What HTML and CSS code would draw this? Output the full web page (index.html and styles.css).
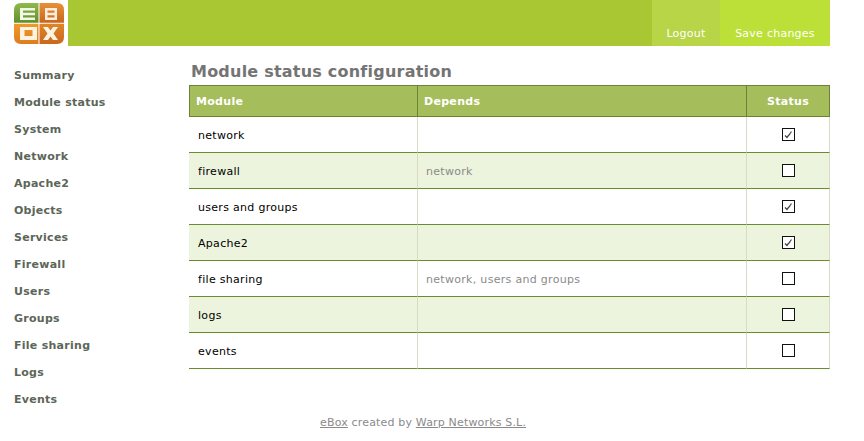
FILE: index.html
```html
<!DOCTYPE html>
<html lang="en">
<head>
<meta charset="utf-8">
<title>Module status configuration</title>
<link rel="stylesheet" href="styles.css">
</head>
<body>
<div class="page">
  <header class="top">
    <div class="logo">
      <svg width="50" height="41" viewBox="0 0 50 41" aria-label="eBox">
        <defs>
          <linearGradient id="g1" x1="0" y1="0" x2="0" y2="1"><stop offset="0" stop-color="#8fbb4c"/><stop offset="1" stop-color="#5f8f2c"/></linearGradient>
          <linearGradient id="g2" x1="0" y1="0" x2="0" y2="1"><stop offset="0" stop-color="#e8913a"/><stop offset="1" stop-color="#c9651c"/></linearGradient>
          <linearGradient id="g3" x1="0" y1="0" x2="0" y2="1"><stop offset="0" stop-color="#f09a2a"/><stop offset="1" stop-color="#dd7d1e"/></linearGradient>
          <linearGradient id="g4" x1="0" y1="0" x2="0" y2="1"><stop offset="0" stop-color="#e08428"/><stop offset="1" stop-color="#c9681e"/></linearGradient>
        </defs>
        <path d="M7 0H24.500V19.800H0V7Q0 0 7 0Z" fill="url(#g1)"/>
        <path d="M25.500 0H43Q50 0 50 7V19.800H25.500Z" fill="url(#g2)"/>
        <path d="M0 20.800H24.500V41H7Q0 41 0 34Z" fill="url(#g3)"/>
        <path d="M25.500 20.800H50V34Q50 41 43 41H25.500Z" fill="url(#g4)"/>
        <path d="M6 5H21V17H6ZM9 7.500V9.800H21V7.500ZM9 12.200V14.500H21V12.200Z" fill="#f4f6ea" fill-rule="evenodd"/>
        <path d="M31 5H43V17H31ZM33.500 7.500V9.800H40.500V7.500ZM33.500 12.200V14.500H40.500V12.200Z" fill="#fbeedd" fill-rule="evenodd"/>
        <path d="M6 24H23V37H6ZM10.500 27V33H18.500V27Z" fill="#fdf3e2" fill-rule="evenodd"/>
        <path d="M29 24H34L36.500 27.500L39 24H44L39.500 30.500L44 37H39L36.500 33.500L34 37H29L33.500 30.500Z" fill="#fdf3e2"/>
      </svg>
    </div>
    <div class="bar">
      <a class="action logout" href="#">Logout</a>
      <a class="action save" href="#">Save changes</a>
    </div>
  </header>
  <div class="body">
    <nav class="menu">
      <a href="#">Summary</a>
      <a href="#">Module status</a>
      <a href="#">System</a>
      <a href="#">Network</a>
      <a href="#">Apache2</a>
      <a href="#">Objects</a>
      <a href="#">Services</a>
      <a href="#">Firewall</a>
      <a href="#">Users</a>
      <a href="#">Groups</a>
      <a href="#">File sharing</a>
      <a href="#">Logs</a>
      <a href="#">Events</a>
    </nav>
    <main class="content">
      <h1>Module status configuration</h1>
      <table class="modules">
        <thead>
          <tr><th class="c-name">Module</th><th class="c-dep">Depends</th><th class="c-status">Status</th></tr>
        </thead>
        <tbody>
          <tr><td>network</td><td class="dep"></td><td class="status"><span class="box"><svg width="11" height="11" viewBox="0 0 11 11"><path d="M2 6.500L4 8.500L8.500 2.500M4 8L7 5" fill="none" stroke="#444" stroke-width="1.200"/></svg></span></td></tr>
          <tr class="alt"><td>firewall</td><td class="dep">network</td><td class="status"><span class="box"></span></td></tr>
          <tr><td>users and groups</td><td class="dep"></td><td class="status"><span class="box"><svg width="11" height="11" viewBox="0 0 11 11"><path d="M2 6.500L4 8.500L8.500 2.500M4 8L7 5" fill="none" stroke="#444" stroke-width="1.200"/></svg></span></td></tr>
          <tr class="alt"><td>Apache2</td><td class="dep"></td><td class="status"><span class="box"><svg width="11" height="11" viewBox="0 0 11 11"><path d="M2 6.500L4 8.500L8.500 2.500M4 8L7 5" fill="none" stroke="#444" stroke-width="1.200"/></svg></span></td></tr>
          <tr><td>file sharing</td><td class="dep">network, users and groups</td><td class="status"><span class="box"></span></td></tr>
          <tr class="alt"><td>logs</td><td class="dep"></td><td class="status"><span class="box"></span></td></tr>
          <tr><td>events</td><td class="dep"></td><td class="status"><span class="box"></span></td></tr>
        </tbody>
      </table>
    </main>
  </div>
  <footer class="foot"><a href="#">eBox</a> created by <a href="#">Warp Networks S.L.</a></footer>
</div>
</body>
</html>
```
FILE: styles.css
```css
* { box-sizing: border-box; }
html, body { margin: 0; padding: 0; background: #fff; }
body { font-family: "DejaVu Sans", sans-serif; font-size: 11px; }
.page { width: 830px; }
.top { display: flex; height: 46px; }
.logo { width: 68px; padding: 3px 0 0 14px; }
.logo svg { display: block; }
.bar { flex: 1; display: flex; justify-content: flex-end; background: #a8c733; }
.action { display: flex; align-items: flex-end; justify-content: center; padding-bottom: 6px; color: #fff; text-decoration: none; letter-spacing: 0.25px; }
.logout { width: 68px; background: #b8d447; }
.save { width: 110px; background: #bde038; }
.body { display: flex; }
.menu { width: 189px; padding-top: 16px; display: flex; flex-direction: column; }
.menu a { height: 27px; line-height: 27px; padding-left: 14px; color: #5c6658; font-weight: bold; text-decoration: none; letter-spacing: 0.27px; white-space: nowrap; }
.content { flex: 1; }
h1 { margin: 16px 0 0 2px; height: 23px; line-height: 20px; font-size: 16px; font-weight: bold; color: #747474; letter-spacing: 0.22px; }
.modules { width: 641px; border-collapse: separate; border-spacing: 0; table-layout: fixed; }
.modules th { height: 32px; background: #a6bd5c; color: #fff; font-size: 11px; font-weight: bold; letter-spacing: 0.3px; text-align: left; padding: 0 0 0 6px; border-top: 1px solid #6b8237; border-bottom: 1px solid #6b8237; border-left: 1px solid #6b8237; }
.modules th:last-child { border-right: 1px solid #6b8237; }
.modules .c-name { width: 228px; }
.modules .c-dep { width: 329px; }
.modules th.c-status { text-align: center; padding: 0; }
.modules td { height: 36px; padding: 2px 0 0 8px; color: #000; border-bottom: 1px solid #6a8c2e; border-left: 1px solid #d8dcc4; letter-spacing: 0.3px; }
.modules td:first-child { border-left: 0; padding-left: 9px; }
.modules td:last-child { border-right: 1px solid #d8dcc4; }
.modules td.dep { color: #8a8a8a; }
.modules td.status { padding: 0; text-align: center; }
.alt td { background: #ecf4dd; }
.box { display: inline-block; width: 13px; height: 13px; border: 1px solid #111; background: #fff; vertical-align: middle; }
.box svg { display: block; }
.foot { margin-top: 3px; margin-left: 189px; padding-left: 131px; color: #8a8a8a; letter-spacing: 0.17px; }
.foot a { color: #8a8a8a; }
```
